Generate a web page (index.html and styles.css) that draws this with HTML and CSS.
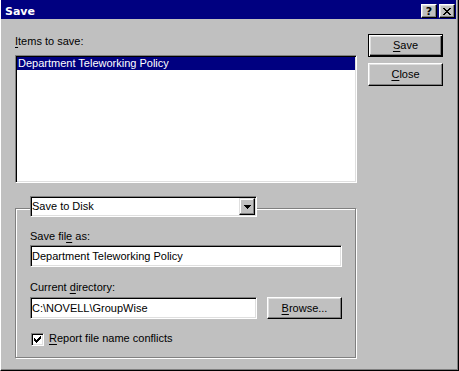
FILE: index.html
```html
<!DOCTYPE html>
<html>
<head>
<meta charset="utf-8">
<link rel="stylesheet" href="styles.css">
</head>
<body>
<div class="window">
  <div class="titlebar">
    <span class="title">Save</span>
    <div class="caption-buttons">
      <div class="cap-btn help">?</div>
      <div class="cap-btn">
        <svg width="8" height="7" viewBox="0 0 8 7" shape-rendering="crispEdges"><path fill="#000" d="M0 0h2v1h-2z M6 0h2v1h-2z M1 1h2v1h-2z M5 1h2v1h-2z M2 2h4v1h-4z M3 3h2v1h-2z M2 4h4v1h-4z M1 5h2v1h-2z M5 5h2v1h-2z M0 6h2v1h-2z M6 6h2v1h-2z"/></svg>
      </div>
    </div>
  </div>
  <div class="content">
    <div class="main">
      <div class="label first"><u>I</u>tems to save:</div>
      <div class="listbox">
        <div class="list-item selected">Department Teleworking Policy</div>
      </div>
      <div class="group">
        <div class="combo">
          <span class="combo-text">Save to Disk</span>
          <span class="combo-btn">
            <svg width="7" height="4" viewBox="0 0 7 4" shape-rendering="crispEdges"><path fill="#000" d="M0 0h7v1h-7z M1 1h5v1h-5z M2 2h3v1h-3z M3 3h1v1h-1z"/></svg>
          </span>
        </div>
        <div class="label after-combo">Save fil<u>e</u> as:</div>
        <div class="field wide">Department Teleworking Policy</div>
        <div class="label after-field">Current <u>d</u>irectory:</div>
        <div class="dir-row">
          <div class="field narrow">C:\NOVELL\GroupWise</div>
          <div class="btn browse"><u>B</u>rowse...</div>
        </div>
        <div class="check-row">
          <span class="checkbox">
            <svg width="7" height="7" viewBox="0 0 7 7" shape-rendering="crispEdges"><path fill="#000" d="M6 0h1v1h-1z M5 1h2v1h-2z M0 2h1v1h-1z M4 2h3v1h-3z M0 3h2v1h-2z M3 3h3v1h-3z M0 4h5v1h-5z M1 5h3v1h-3z M2 6h1v1h-1z"/></svg>
          </span>
          <span class="check-label"><u>R</u>eport file name conflicts</span>
        </div>
      </div>
    </div>
    <div class="side">
      <div class="btn default"><u>S</u>ave</div>
      <div class="btn close-btn"><u>C</u>lose</div>
    </div>
  </div>
</div>
</body>
</html>
```

FILE: styles.css
```css
* { box-sizing: border-box; }
html, body { margin: 0; padding: 0; }
body {
  background: #c0c0c0;
  font-family: "Liberation Sans", Arial, sans-serif;
  font-size: 11px;
  line-height: 13px;
  color: #000;
}
u { text-decoration-thickness: 1px; text-underline-offset: 2px; }

.window {
  width: 459px;
  height: 371px;
  border-style: solid;
  border-width: 0 1px 1px 1px;
  border-color: #fff #000 #000 #fff;
  box-shadow: inset -1px -1px #808080;
  background: #c0c0c0;
}

.titlebar {
  display: flex;
  align-items: flex-start;
  height: 19px;
  margin-right: 2px;
  padding-left: 4px;
  background: #000080;
}
.title {
  font-family: "DejaVu Sans", sans-serif;
  font-weight: bold;
  font-size: 11px;
  line-height: 13px;
  color: #fff;
  margin-top: 5px;
}
.caption-buttons {
  margin-left: auto;
  margin-right: 1px;
  margin-top: 4px;
  display: flex;
  gap: 2px;
}
.cap-btn {
  width: 16px;
  height: 14px;
  display: flex;
  align-items: center;
  justify-content: center;
  background: #c0c0c0;
  border: 1px solid;
  border-color: #fff #000 #000 #fff;
  box-shadow: inset -1px -1px #808080, inset 1px 1px #dfdfdf;
}
.cap-btn.help {
  font-family: "DejaVu Sans", sans-serif;
  font-weight: bold;
  font-size: 11px;
  line-height: 12px;
  padding-top: 1px;
}

.content {
  display: flex;
  padding: 15px 0 0 14px;
}
.main { width: 342px; }
.label.first { margin-top: 1px; }

.listbox {
  margin-top: 7px;
  height: 128px;
  background: #fff;
  border: 1px solid;
  border-color: #808080 #fff #fff #808080;
  box-shadow: inset 1px 1px #000, inset -1px -1px #dfdfdf;
  padding: 1px;
}
.list-item {
  height: 13px;
  padding-left: 1px;
  white-space: nowrap;
}
.list-item.selected {
  background: #000080;
  color: #fff;
}

.group {
  margin-top: 25px;
  width: 341px;
  border: 1px solid #808080;
  box-shadow: inset 1px 1px #fff, 1px 1px #fff;
  padding: 0 0 11px 14px;
}
.combo {
  margin-top: -13px;
  width: 227px;
  height: 21px;
  display: flex;
  align-items: stretch;
  background: #fff;
  border: 1px solid;
  border-color: #808080 #fff #fff #808080;
  box-shadow: inset 1px 1px #000, inset -1px -1px #dfdfdf;
  padding: 1px;
}
.combo-text {
  display: flex;
  align-items: center;
  white-space: nowrap;
}
.combo-btn {
  margin-left: auto;
  width: 16px;
  display: flex;
  align-items: center;
  justify-content: center;
  padding-top: 1px;
  background: #c0c0c0;
  border: 1px solid;
  border-color: #dfdfdf #000 #000 #dfdfdf;
  box-shadow: inset -1px -1px #808080, inset 1px 1px #fff;
}
.label.after-combo { margin-top: 13px; }
.label.after-field { margin-top: 14px; }

.field {
  height: 22px;
  display: flex;
  align-items: center;
  background: #fff;
  border: 1px solid;
  border-color: #808080 #fff #fff #808080;
  box-shadow: inset 1px 1px #000, inset -1px -1px #dfdfdf;
  padding: 0 1px;
  white-space: nowrap;
}
.field.wide { margin-top: 2px; width: 312px; }
.field.narrow { width: 227px; }

.dir-row {
  margin-top: 3px;
  display: flex;
  gap: 10px;
}

.btn {
  width: 75px;
  height: 23px;
  display: flex;
  align-items: center;
  justify-content: center;
  background: #c0c0c0;
  border: 1px solid;
  border-color: #fff #000 #000 #fff;
  box-shadow: inset -1px -1px #808080, inset 1px 1px #dfdfdf;
}
.btn.browse { height: 22px; }
.btn.default {
  border-color: #000;
  box-shadow: inset 1px 1px #fff, inset -1px -1px #000, inset -2px -2px #808080, inset 2px 2px #dfdfdf;
}
.side { margin-left: 11px; }
.btn.close-btn { margin-top: 6px; }

.check-row {
  margin-top: 13px;
  display: flex;
  align-items: flex-start;
}
.checkbox {
  margin: 1px 0 0 1px;
  width: 13px;
  height: 13px;
  display: flex;
  align-items: center;
  justify-content: center;
  background: #fff;
  border: 1px solid;
  border-color: #808080 #fff #fff #808080;
  box-shadow: inset 1px 1px #000, inset -1px -1px #dfdfdf;
}
.check-label { margin-left: 5px; white-space: nowrap; }
```
